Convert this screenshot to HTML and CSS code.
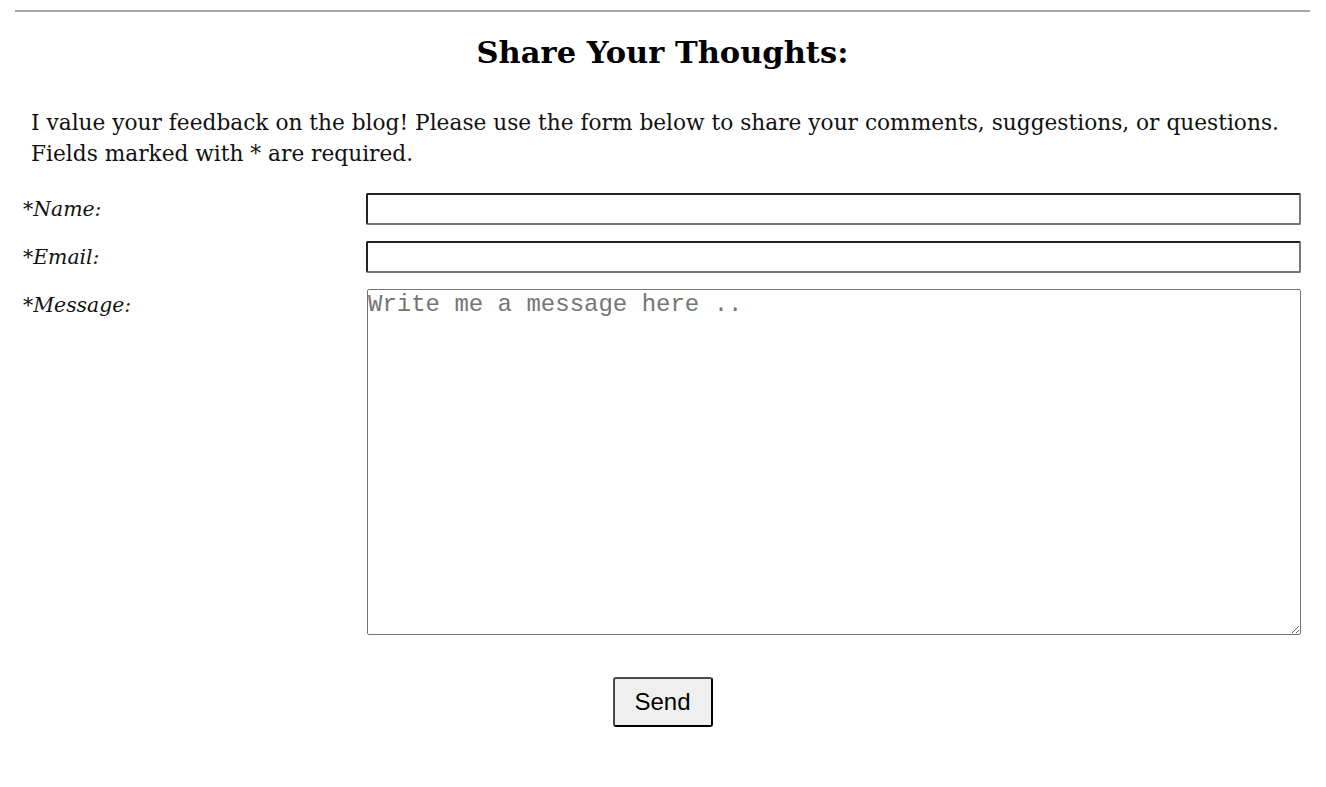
FILE: index.html
```html
<!DOCTYPE html>
<html lang="en">
<head>
<meta charset="utf-8">
<title>Share Your Thoughts</title>
<link rel="stylesheet" href="styles.css">
</head>
<body>
<main class="page">
  <hr class="rule">
  <h2 class="title">Share Your Thoughts:</h2>
  <p class="intro">I value your feedback on the blog! Please use the form below to share your comments, suggestions, or questions. Fields marked with * are required.</p>
  <form class="form">
    <div class="row">
      <label class="label" for="name">*Name:</label>
      <input class="field" id="name" type="text">
    </div>
    <div class="row">
      <label class="label" for="email">*Email:</label>
      <input class="field" id="email" type="email">
    </div>
    <div class="row">
      <label class="label" for="msg">*Message:</label>
      <textarea class="area" id="msg" placeholder="Write me a message here .."></textarea>
    </div>
    <div class="actions">
      <button class="send" type="button">Send</button>
    </div>
  </form>
</main>
</body>
</html>
```

FILE: styles.css
```css
html, body {
  margin: 0;
  background: #fff;
}
body {
  padding: 0;
  font-family: "DejaVu Serif", "Liberation Serif", serif;
  color: #111;
}
.page {
  padding: 0 16px 0 15px;
}
.rule {
  margin: 10px 0 0 0;
  border: 0;
  border-top: 2px solid #a9a9a9;
  height: 0;
}
.title {
  margin: 18px 0 0 0;
  text-align: center;
  font-size: 30.5px;
  line-height: 44px;
  font-weight: bold;
  color: #000;
}
.intro {
  margin: 33px 0 0 16px;
  font-size: 21.7px;
  line-height: 31px;
}
.form {
  margin: 24px 9px 0 8px;
}
.row {
  display: grid;
  grid-template-columns: 343px 1fr;
  margin-bottom: 16px;
  align-items: start;
}
.label {
  font-style: italic;
  font-size: 20.4px;
  line-height: 32px;
}
.field {
  box-sizing: border-box;
  height: 32px;
  width: 100%;
  margin: 0;
  border-style: solid;
  border-width: 2px;
  border-color: #222 #777 #777 #222;
  border-radius: 2px;
  background: #fff;
}
.area {
  box-sizing: border-box;
  width: calc(100% - 1px);
  height: 346px;
  margin: 0 0 0 1px;
  border: 1px solid #767676;
  border-radius: 2px;
  padding: 1px 0 0 0;
  font-family: "Liberation Mono", monospace;
  font-size: 24px;
  resize: vertical;
}
.area::placeholder {
  color: #757575;
}
.actions {
  display: flex;
  justify-content: center;
  padding-top: 26px;
  margin-left: -8px;
  margin-right: -9px;
}
.send {
  box-sizing: border-box;
  width: 100px;
  height: 50px;
  font-family: "Liberation Sans", Arial, sans-serif;
  font-size: 24px;
  color: #000;
  background: #efefef;
  border-style: solid;
  border-width: 2px;
  border-color: #4a4a4a #000 #000 #4a4a4a;
  border-radius: 3px;
}
```
